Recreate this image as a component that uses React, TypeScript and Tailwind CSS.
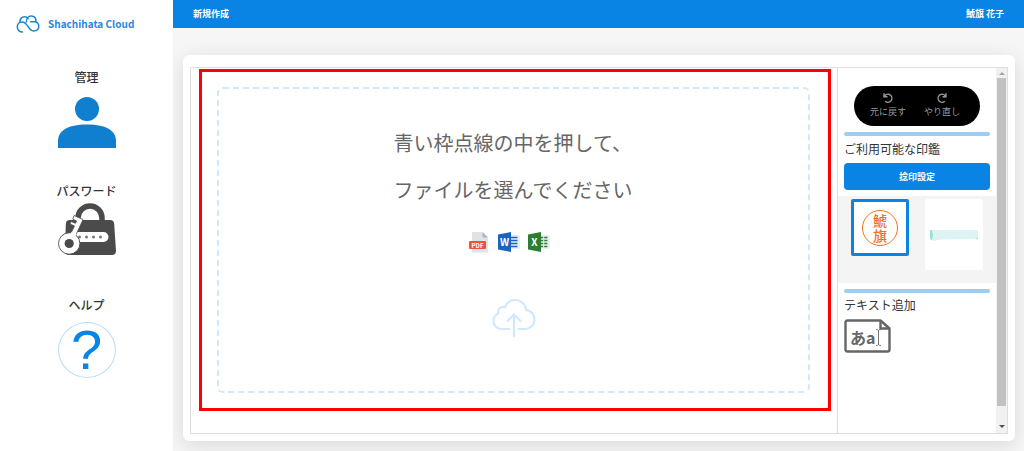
import type { ReactNode } from "react";

const user = { family: "鯱旗", given: "花子" };

function CloudLogo() {
  return (
    <svg viewBox="0 0 24 18" className="h-[18px] w-6 shrink-0" fill="none" stroke="#1c86cc" strokeWidth="1.500" strokeLinecap="round">
      <path d="M6.500 17C3.500 17 1.300 15 1.300 12 1.300 9 3.500 7 6.200 7 9 7 10.300 9 11.800 11.200 13.300 13.700 14.800 16 17.500 16c3.300 0 5.300-2 5.300-4.700 0-2.800-2-4.600-4.300-4.600h-4" />
      <path d="M4 7.200C3.800 3.500 6 1.800 8.500 1.800c2 0 3 .7 3.800 1.800" />
      <path d="M10.300 7c0-3.500 2.200-6 4.900-6C18 1 20 3.200 20 6.700" />
    </svg>
  );
}

function AdminIcon() {
  return (
    <svg viewBox="0 0 58 66" className="h-[66px] w-[58px]" fill="#117fd0">
      <circle cx="29" cy="21" r="12" />
      <path d="M0 60V53C0 43 9 36.500 29 36.500S58 43 58 53v7Z" />
    </svg>
  );
}

function PasswordIcon() {
  return (
    <svg viewBox="0 0 58 66" className="h-[66px] w-[58px]">
      <path d="M20 19v-3a12 12 0 0 1 24 0v3" fill="none" stroke="#4b4b4b" strokeWidth="5.500" />
      <path d="M12 18h40q4 0 4.200 4L58 49q.1 4-4 4H11q-4 0-4-4L7.800 22q.2-4 4.200-4Z" fill="#4b4b4b" />
      <rect x="14" y="30" width="36.500" height="10" rx="5" fill="#fff" />
      <g fill="#777">
        <circle cx="21.500" cy="35" r="1.500" />
        <circle cx="28.500" cy="35" r="1.500" />
        <circle cx="35.500" cy="35" r="1.500" />
        <circle cx="42.500" cy="35" r="1.500" />
      </g>
      <path
        d="M16 13.500 25 17.500 17.500 34 12.500 32 16.500 24 12 22 13 19.500 17.500 21.300 18.500 19 14.800 17.200Z"
        fill="#fff"
        stroke="#4b4b4b"
        strokeWidth=".8"
      />
      <circle cx="11.200" cy="41.500" r="10.700" fill="#fff" stroke="#4b4b4b" strokeWidth=".9" />
      <path d="m13.500 30 5.200 2-2 3-5.200-2Z" fill="#fff" />
      <circle cx="11.200" cy="41.500" r="4.600" fill="#4b4b4b" />
    </svg>
  );
}

function HelpIcon() {
  return (
    <span className="mt-1.5 flex h-14 w-[58px] items-center justify-center rounded-[50%] border border-[#b9dcf7] font-['Liberation_Sans',sans-serif] text-[56px] leading-none text-[#0a84e4]">
      ?
    </span>
  );
}

function PdfIcon() {
  return (
    <svg viewBox="0 0 22 22" className="size-[22px]">
      <path d="M4 1h10.500L20 6.500V20q0 1.500-1.500 1.500h-13Q4 21.500 4 20Z" fill="#dfe3e6" />
      <path d="M14.500 1 20 6.500h-4q-1.500 0-1.500-1.500Z" fill="#aab6bf" />
      <rect x="1" y="10" width="17" height="8" rx="1" fill="#f2503f" />
      <text x="9.500" y="16.500" textAnchor="middle" fontSize="6" fontWeight="700" fill="#fff">PDF</text>
    </svg>
  );
}

function OfficeIcon({ letter, color, sheet }: { letter: string; color: string; sheet?: boolean }) {
  return (
    <svg viewBox="0 0 22 22" className="size-[22px]">
      <rect x="11" y="4" width="11" height="14" rx="1" fill="#eceff1" />
      <path
        d="M12 6.500h7.500M12 9.500h7.500M12 12.500h7.500M12 15.500h7.500"
        stroke={color}
        strokeWidth="1.400"
        strokeDasharray={sheet ? "3.200 1" : undefined}
      />
      <path d="M0 3.500 13 1v20L0 18.500Z" fill={color} />
      <text x="6.500" y="14.500" textAnchor="middle" fontSize="10" fontWeight="700" fill="#fff">{letter}</text>
    </svg>
  );
}

function UploadCloud() {
  return (
    <svg viewBox="0 0 44 40" className="h-10 w-11" fill="none" stroke="#cfe8fd" strokeWidth="2.200" strokeLinecap="round" strokeLinejoin="round">
      <path d="M17 31h-7C5 31 1.500 27.500 1.500 23c0-3.500 2-6.200 4.700-7.200C5.500 11.500 8.500 8.300 13 9 15 4.500 18.800 2 23 2c6 0 10.500 4 11.200 9.800 4.800.7 8.300 4.700 8.300 9.700 0 5.500-4 9.500-9 9.500h-7" />
      <path d="M22 38V16.500M15.500 23l6.500-6.500 6.500 6.500" />
    </svg>
  );
}

function TextBoxIcon() {
  return (
    <svg viewBox="0 0 47 34" className="h-[34px] w-[47px]">
      <path d="M3.500 1.500h33l9 8v21q0 2-2 2h-40q-2 0-2-2v-27q0-2 2-2Z" fill="#fff" stroke="#666" strokeWidth="2.400" strokeLinejoin="round" />
      <path d="M36.500 1.500v8h9" fill="none" stroke="#666" strokeWidth="2.400" />
      <text x="6" y="25" fontSize="16" fontWeight="700" fill="#666">あa</text>
      <path d="M32 10.500q2 0 2.500 1 .5-1 2.500-1M34.500 11v15M32 26.500q2 0 2.500-1 .5 1 2.500 1" fill="none" stroke="#777" strokeWidth="1" />
    </svg>
  );
}

function RotateIcon({ flipped }: { flipped?: boolean }) {
  return (
    <svg viewBox="0 0 10 10" className="size-2.5" fill="none" stroke="currentColor" strokeWidth="1.400">
      {flipped ? (
        <path d="M7.800 8.200A4 4 0 1 1 8 2.500L8.800 3.500M9 .3v3.500H5.500" />
      ) : (
        <path d="M2.200 8.200A4 4 0 1 0 2 2.500L1.200 3.500M1 .3v3.500h3.500" />
      )}
    </svg>
  );
}

function NavItem({ label, children }: { label: string; children: ReactNode }) {
  return (
    <a href="#" className="flex h-[86px] flex-col items-center gap-0.5 text-[12px] leading-[18px] font-medium text-[#333]">
      {label}
      {children}
    </a>
  );
}

function Divider() {
  return <div className="mx-1.5 h-1 rounded-full bg-[#9bcdf5]" />;
}

function Scrollbar() {
  return (
    <div aria-hidden="true" className="flex w-[11px] shrink-0 flex-col items-center bg-[#f1f1f1]">
      <span className="flex h-2.5 items-center">
        <svg viewBox="0 0 6 3" className="h-[3px] w-1.5" fill="#a3a3a3"><path d="M0 3 3 0l3 3Z" /></svg>
      </span>
      <span className="w-[9px] grow bg-[#c1c1c1]" />
      <span className="flex h-[27px] items-end pb-[5px]">
        <svg viewBox="0 0 6 3" className="h-[3px] w-1.5" fill="#505050"><path d="M0 0h6L3 3Z" /></svg>
      </span>
    </div>
  );
}

function ToolPanel() {
  return (
    <aside className="w-[158px] shrink-0 text-[12px] leading-[18px] text-[#333]">
      <div className="mx-4 mt-[18px] mb-1.5 flex h-10 items-center justify-center gap-[18px] rounded-full bg-black pr-1 text-[9px] leading-[14px] text-[#9a9a9a]">
        <button type="button" className="flex flex-col items-center gap-0.5">
          <RotateIcon />
          元に戻す
        </button>
        <button type="button" className="flex flex-col items-center gap-0.5">
          <RotateIcon flipped />
          やり直し
        </button>
      </div>
      <Divider />
      <h2 className="mx-1.5 mt-1">ご利用可能な印鑑</h2>
      <div className="mx-1.5 mt-[5px] mb-1.5">
        <button type="button" className="h-[27px] w-full rounded bg-[#0a84e4] text-[9px] font-bold text-white">
          捻印設定
        </button>
      </div>
      <div className="flex h-[87px] items-start justify-between bg-[#f4f4f4] px-[13px] pt-[3px]">
        <button type="button" className="flex h-[57px] w-[58px] items-center justify-center rounded-xs border-3 border-[#0a84e4] bg-white">
          <span className="flex size-9 items-center justify-center rounded-full border border-[#f2711c] text-[14px] leading-[15px] font-medium text-[#f2711c]">
            <span className="w-3.5">鯱旗</span>
          </span>
        </button>
        <button type="button" aria-label="捻印" className="flex h-[71px] w-[58px] items-center justify-center rounded-xs bg-white">
          <svg viewBox="0 0 48 12" className="h-3 w-12">
            <path d="M0 1h48v7l-3 2-33 .5L3 12 0 10Z" fill="#def4f4" />
            <path d="M0 1h2l1 5-1 5-2-1Z" fill="#9fdedc" />
            <path d="m45 10 3-2v2.500Z" fill="#b5e5e3" />
          </svg>
        </button>
      </div>
      <div className="mt-1.5">
        <Divider />
      </div>
      <h2 className="mx-1.5 mt-[3px]">テキスト追加</h2>
      <button type="button" aria-label="テキスト追加" className="mx-1.5 mt-[5px] block">
        <TextBoxIcon />
      </button>
    </aside>
  );
}

function DropZone() {
  return (
    <div className="flex grow border-3 border-[#fe0000] py-[15px] pr-[18px] pl-[15px]">
      <label className="flex grow cursor-pointer flex-col items-center rounded-md border-2 border-dashed border-[#cfe8fd] pt-[30px] text-[20px] leading-[47px] text-[#666]">
        <input type="file" className="sr-only" />
        <span className="w-60">青い枠点線の中を押して、</span>
        <span className="w-60">ファイルを選んでください</span>
        <span className="mt-[18px] flex gap-2 pr-2.5">
          <PdfIcon />
          <OfficeIcon letter="W" color="#1964c0" />
          <OfficeIcon letter="X" color="#2f7d33" sheet />
        </span>
        <span className="mt-[45px]">
          <UploadCloud />
        </span>
      </label>
    </div>
  );
}

export default function App() {
  return (
    <div className="flex min-h-screen bg-[#f6f6f6] font-['Noto_Sans_CJK_JP',sans-serif]">
      <div className="z-10 w-[173px] shrink-0 bg-white">
        <a href="#" className="flex items-center gap-2 px-4 pt-[15px] text-[10px] leading-[18px] font-bold text-[#2b87dd]">
          <CloudLogo />
          Shachihata Cloud
        </a>
        <nav className="mt-[35px] flex flex-col gap-7">
          <NavItem label="管理">
            <AdminIcon />
          </NavItem>
          <NavItem label="パスワード">
            <PasswordIcon />
          </NavItem>
          <NavItem label="ヘルプ">
            <HelpIcon />
          </NavItem>
        </nav>
      </div>
      <div className="flex min-w-0 grow flex-col">
        <header className="flex h-7 items-center justify-between bg-[#0a84e4] px-5 text-[9px] font-bold text-white">
          <h1>新規作成</h1>
          <span>{user.family} {user.given}</span>
        </header>
        <main className="flex grow pt-[27px] pr-[9px] pb-2.5 pl-2.5">
          <div className="flex grow rounded-md bg-white px-[7px] pt-3 pb-[7px] shadow-[0_4px_20px_rgba(0,0,0,0.12)]">
            <div className="flex grow border border-[#dedede]">
              <div className="flex grow border-r border-[#dedede] pt-px pr-1.5 pb-[22px] pl-2">
                <DropZone />
              </div>
              <ToolPanel />
              <Scrollbar />
            </div>
          </div>
        </main>
      </div>
    </div>
  );
}
